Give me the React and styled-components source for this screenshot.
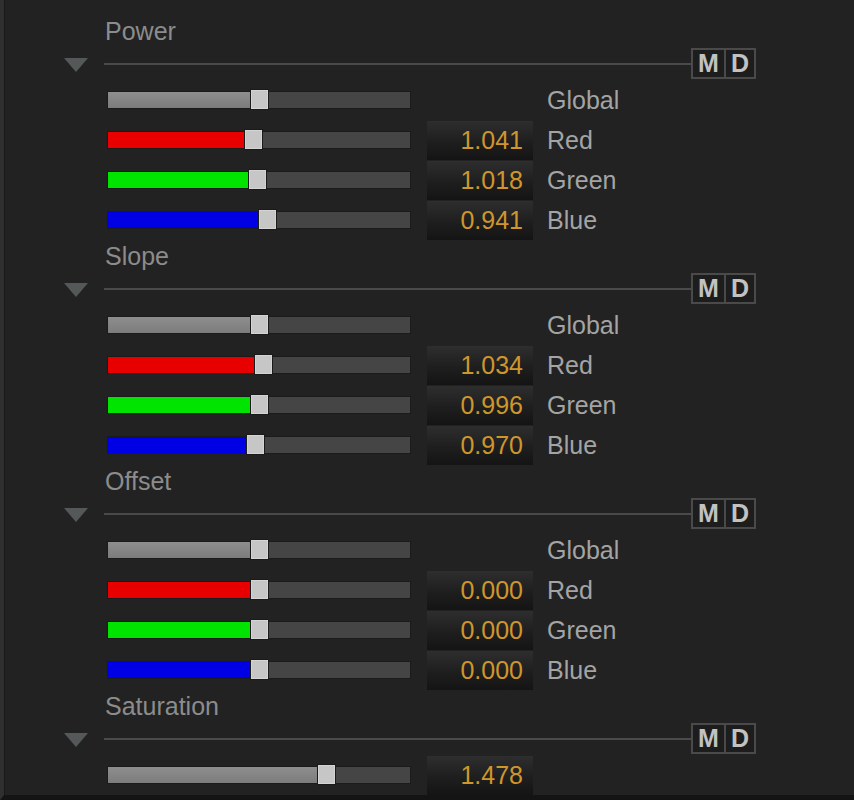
import styled, { createGlobalStyle } from "styled-components";

const GlobalStyle = createGlobalStyle`
  html, body {
    margin: 0;
    padding: 0;
    background: #222222;
  }
  body {
    font-family: "Liberation Sans", Arial, sans-serif;
  }
`;

const Frame = styled.div`
  width: 854px;
  height: 800px;
  box-sizing: border-box;
  background: #222222;
  border-left: 4px solid #2f2f2f;
  border-bottom: 5px solid #141414;
  overflow: hidden;
`;

const Inner = styled.div`
  height: 100%;
  border-left: 1px solid #191919;
  padding-top: 15px;
  box-sizing: border-box;
`;

const Section = styled.section`
  display: flex;
  flex-direction: column;
`;

const Title = styled.div`
  height: 32px;
  line-height: 32px;
  padding-left: 100px;
  font-size: 25px;
  color: #8c8c8c;
`;

const Header = styled.div`
  height: 33px;
  display: flex;
  align-items: center;
  padding-left: 59px;
`;

const Caret = styled.div`
  width: 0;
  height: 0;
  border-left: 12px solid transparent;
  border-right: 12px solid transparent;
  border-top: 14px solid #545858;
  margin-right: 16px;
  margin-top: 2px;
`;

const Rule = styled.div`
  width: 587px;
  height: 2px;
  background: #4a4a4a;
`;

const Toggles = styled.div`
  display: flex;
  border: 2px solid #4a4a4a;
  background: #4a4a4a;
  gap: 2px;
  height: 27px;
`;

const Toggle = styled.button`
  all: unset;
  width: ${(p) => p.$w}px;
  height: 27px;
  display: flex;
  align-items: center;
  justify-content: center;
  background: #1d1d1d;
  color: #c2c2c2;
  font-family: "Liberation Sans", Arial, sans-serif;
  font-weight: bold;
  font-size: 25px;
`;

const Row = styled.div`
  height: 40px;
  display: flex;
  align-items: center;
  padding-left: 103px;
`;

const Track = styled.div`
  position: relative;
  width: 302px;
  height: 16px;
  box-sizing: border-box;
  background: #454545;
  box-shadow: 0 0 0 1px #1b1b1b;
  flex: none;
`;

const fills = {
  global: "linear-gradient(#8e8e8e, #7c7c7c)",
  red: "#e80000",
  green: "#00e400",
  blue: "#0000e4",
};

const Fill = styled.div`
  height: 100%;
  background: ${(p) => fills[p.$kind]};
`;

const Thumb = styled.div`
  position: absolute;
  top: -2px;
  width: 17px;
  height: 19px;
  box-sizing: border-box;
  background: #c6c6c6;
  border: 1px solid #d4d4d4;
  box-shadow: 0 0 0 1px #1a1a1a;
`;

const Value = styled.div`
  width: 106px;
  height: 39px;
  margin-left: 17px;
  box-sizing: border-box;
  padding-right: 10px;
  display: flex;
  align-items: center;
  justify-content: flex-end;
  background: linear-gradient(#2e2e2e, #1e1e1e 55%, #141414);
  color: #cf962c;
  font-size: 25px;
  flex: none;
  visibility: ${(p) => (p.$hidden ? "hidden" : "visible")};
`;

const Label = styled.div`
  margin-left: 14px;
  font-size: 25px;
  color: #a4a4a4;
`;

const sections = [
  {
    title: "Power",
    rows: [
      { kind: "global", label: "Global", pos: 143 },
      { kind: "red", label: "Red", pos: 137, value: "1.041" },
      { kind: "green", label: "Green", pos: 141, value: "1.018" },
      { kind: "blue", label: "Blue", pos: 151, value: "0.941" },
    ],
  },
  {
    title: "Slope",
    rows: [
      { kind: "global", label: "Global", pos: 143 },
      { kind: "red", label: "Red", pos: 147, value: "1.034" },
      { kind: "green", label: "Green", pos: 143, value: "0.996" },
      { kind: "blue", label: "Blue", pos: 139, value: "0.970" },
    ],
  },
  {
    title: "Offset",
    rows: [
      { kind: "global", label: "Global", pos: 143 },
      { kind: "red", label: "Red", pos: 143, value: "0.000" },
      { kind: "green", label: "Green", pos: 143, value: "0.000" },
      { kind: "blue", label: "Blue", pos: 143, value: "0.000" },
    ],
  },
  {
    title: "Saturation",
    rows: [{ kind: "global", pos: 210, value: "1.478" }],
  },
];

const Slider = ({ kind, pos }) => (
  <Track>
    <Fill $kind={kind} style={{ width: pos }} />
    <Thumb style={{ left: pos }} />
  </Track>
);

const App = () => {
  return (
    <>
      <GlobalStyle />
      <Frame>
        <Inner>
          {sections.map((s) => (
            <Section key={s.title}>
              <Title>{s.title}</Title>
              <Header>
                <Caret />
                <Rule />
                <Toggles>
                  <Toggle $w={31}>M</Toggle>
                  <Toggle $w={28}>D</Toggle>
                </Toggles>
              </Header>
              {s.rows.map((r, i) => (
                <Row key={i}>
                  <Slider kind={r.kind} pos={r.pos} />
                  <Value $hidden={!r.value}>{r.value}</Value>
                  {r.label && <Label>{r.label}</Label>}
                </Row>
              ))}
            </Section>
          ))}
        </Inner>
      </Frame>
    </>
  );
};

export default App;
